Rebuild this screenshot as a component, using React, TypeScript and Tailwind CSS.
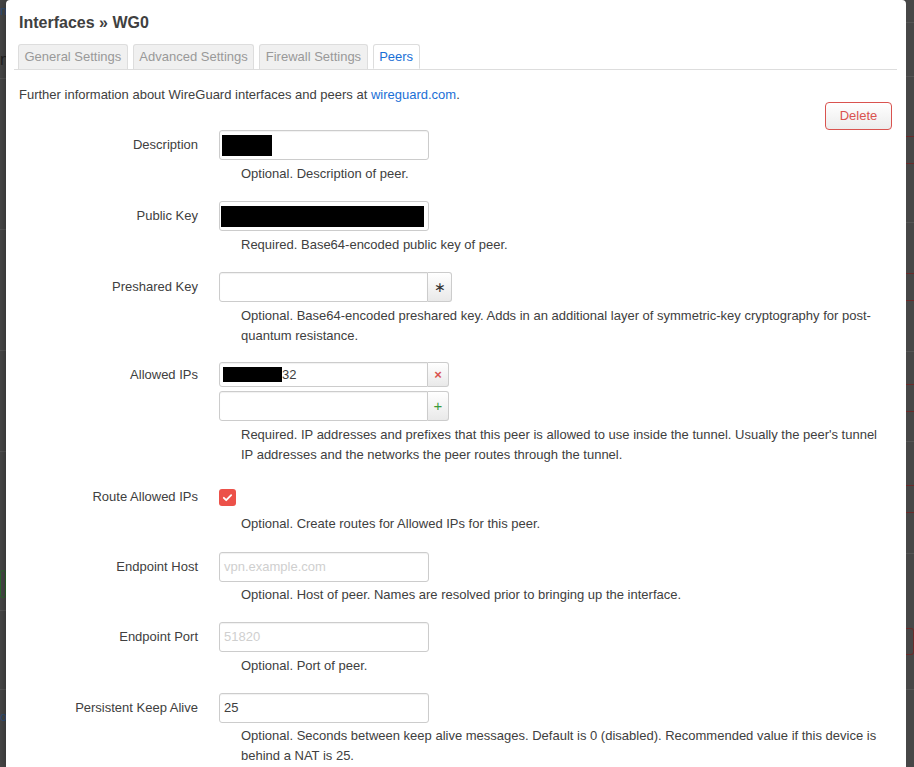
import type { ReactNode } from "react"

const font = "font-['Liberation_Sans',Arial,Helvetica,sans-serif]"

function Tab({ label, active }: { label: string; active?: boolean }) {
  if (active) {
    return (
      <div className="mr-[5px] -mb-px flex h-[25px] items-center rounded-t-[3px] border border-[#ddd] border-b-white bg-white px-[5.5px] text-[13px] text-[#1a6fd6]">
        {label}
      </div>
    )
  }
  return (
    <div className="mr-[5px] flex h-[25px] items-center rounded-t-[3px] border border-b-0 border-[#ddd] bg-[#f0f0f0] px-[5.5px] text-[13px] text-[#999]">
      {label}
    </div>
  )
}

function Row({
  label,
  fieldHeight = 30,
  help,
  helpGap = "mt-[4px]",
  spacing = "mb-[17px]",
  children,
}: {
  label: string
  fieldHeight?: 25 | 30
  help: ReactNode
  helpGap?: string
  spacing?: string
  children: ReactNode
}) {
  return (
    <div className={`${spacing} flex`}>
      <div
        className={`flex w-[179px] shrink-0 items-center justify-end text-[13px] text-[#404040] ${
          fieldHeight === 25 ? "h-[25px]" : "h-[30px]"
        }`}
      >
        {label}
      </div>
      <div className="ml-[21px] flex-1">
        {children}
        <div className={`${helpGap} pl-[22px] text-[13px] leading-[20px] text-[#404040]`}>{help}</div>
      </div>
    </div>
  )
}

function TextInput({ value, placeholder, redact }: { value?: string; placeholder?: string; redact?: number }) {
  return (
    <div
      className={`flex h-[30px] w-[210px] items-center rounded-[3px] border border-[#ccc] bg-white text-[13px] text-[#404040] shadow-[inset_0_1px_1px_rgba(0,0,0,0.06)] ${
        redact ? "px-[2px]" : "px-[4px]"
      }`}
    >
      {redact ? <span className="h-[21px] bg-black" style={{ width: redact }} /> : null}
      {value ? <span>{value}</span> : null}
      {placeholder ? <span className="text-[#cfcfcf]">{placeholder}</span> : null}
    </div>
  )
}

function AddonInput({
  height,
  addonWidth,
  addon,
  children,
}: {
  height: 25 | 30
  addonWidth: string
  addon: ReactNode
  children?: ReactNode
}) {
  return (
    <div className={`flex ${height === 25 ? "h-[25px]" : "h-[30px]"}`}>
      <div className="flex w-[209px] items-center rounded-l-[3px] border border-[#ccc] bg-white px-[3px] text-[13px] text-[#404040] shadow-[inset_0_1px_1px_rgba(0,0,0,0.06)]">
        {children}
      </div>
      <div
        className={`flex ${addonWidth} items-center justify-center rounded-r-[3px] border border-l-0 border-[#ccc] bg-gradient-to-b from-white to-[#e9e9e9] text-[14px]`}
      >
        {addon}
      </div>
    </div>
  )
}

function LeftStrip() {
  return (
    <div className="flex w-[6px] shrink-0 flex-col overflow-hidden bg-[#474747] text-[13px] leading-none">
      <div className="mt-[4px] h-[12px] text-[#2d4f7a]">n</div>
      <div className="mt-[36px] h-[16px] text-[16px] text-[#222]">n</div>
      <div className="mt-[10px] border-t border-[#555]" />
      <div className="mt-[150px] border-t border-[#555]" />
      <div className="mt-[120px] border-t border-[#555]" />
      <div className="mt-[100px] border-t border-[#555]" />
      <div className="mt-[118px] h-[28px] rounded-[3px] border border-[#2c6a2c]" />
      <div className="mt-[12px] border-t border-[#555]" />
      <div className="mt-[78px] border-t border-[#555]" />
      <div className="mt-[20px] text-[#2d4f7a]">o</div>
    </div>
  )
}

function RightStrip() {
  return (
    <div className="flex w-[8px] shrink-0 flex-col bg-[#474747]">
      <div className="mt-[22px] border-t border-[#555]" />
      <div className="mt-[53px] border-t border-[#555]" />
      <div className="mt-[59px] border-t border-[#6a2a2a]" />
      <div className="mt-[26px] border-t border-[#6a2a2a]" />
      <div className="mt-[58px] border-t border-[#555]" />
      <div className="mt-[50px] border-t border-[#6a2a2a]" />
      <div className="mt-[26px] border-t border-[#6a2a2a]" />
      <div className="mt-[50px] border-t border-[#555]" />
      <div className="mt-[32px] border-t border-[#6a2a2a]" />
      <div className="mt-[26px] border-t border-[#6a2a2a]" />
      <div className="mt-[29px] border-t border-[#555]" />
      <div className="mt-[43px] border-t border-[#6a2a2a]" />
      <div className="mt-[26px] border-t border-[#6a2a2a]" />
      <div className="mt-[40px] border-t border-[#555]" />
      <div className="mt-[74px] h-[27px] rounded-r-[3px] border border-l-0 border-[#6a2a2a]" />
      <div className="mt-[34px] border-t border-[#555]" />
    </div>
  )
}

export default function App() {
  return (
    <div className={`flex h-[767px] w-[914px] overflow-hidden bg-[#474747] ${font}`}>
      <LeftStrip />

      {/* Modal */}
      <div className="w-[900px] shrink-0 rounded-t-[4px] bg-white pl-[13px] pr-[14px] pt-[13px] shadow-[0_0_10px_rgba(0,0,0,0.4)]">
        <h2 className="text-[16px] font-bold leading-[20px] text-[#404040]">Interfaces » WG0</h2>

        <div className="-mx-[5px] mt-[11px] flex border-b border-[#ddd] pl-[4px]">
          <Tab label="General Settings" />
          <Tab label="Advanced Settings" />
          <Tab label="Firewall Settings" />
          <Tab label="Peers" active />
        </div>

        <p className="mt-[15px] text-[13px] leading-[20px] text-[#404040]">
          Further information about WireGuard interfaces and peers at{" "}
          <span className="text-[#1a6fd6]">wireguard.com</span>.
        </p>

        <div className="-mt-[3px] flex justify-end">
          <button className="h-[28px] w-[67px] rounded-[4px] border border-[#d9534f] bg-gradient-to-b from-white to-[#ececec] text-[13px] text-[#d9534f]">
            Delete
          </button>
        </div>

        <div className="flex flex-col">
          <Row label="Description" help="Optional. Description of peer.">
            <TextInput redact={50} />
          </Row>

          <Row label="Public Key" help="Required. Base64-encoded public key of peer.">
            <div className="flex h-[30px] w-[210px] items-center rounded-[3px] border border-[#ccc] bg-white px-[1px]">
              <span className="h-[21px] w-[203px] bg-black" />
            </div>
          </Row>

          <Row
            label="Preshared Key"
            spacing="mb-[16px]"
            help="Optional. Base64-encoded preshared key. Adds in an additional layer of symmetric-key cryptography for post-quantum resistance."
          >
            <AddonInput height={30} addonWidth="w-[24px]" addon={<span className="text-[#333]">∗</span>} />
          </Row>

          <Row
            label="Allowed IPs"
            fieldHeight={25}
            help="Required. IP addresses and prefixes that this peer is allowed to use inside the tunnel. Usually the peer's tunnel IP addresses and the networks the peer routes through the tunnel."
          >
            <AddonInput height={25} addonWidth="w-[21px]" addon={<span className="text-[13px] font-bold text-[#d9534f]">×</span>}>
              <span className="h-[15px] w-[59px] bg-black" />
              <span>32</span>
            </AddonInput>
            <div className="mt-[4px]">
              <AddonInput height={30} addonWidth="w-[21px]" addon={<span className="text-[15px] text-[#3a9a3a]">+</span>} />
            </div>
          </Row>

          <Row
            label="Route Allowed IPs"
            helpGap="mt-[2px]"
            spacing="mb-[18px]"
            help="Optional. Create routes for Allowed IPs for this peer."
          >
            <div className="flex h-[30px] items-center">
              <span className="flex h-[17px] w-[17px] items-center justify-center rounded-[3px] bg-[#ec5149]">
                <svg width="11" height="11" viewBox="0 0 12 12" fill="none">
                  <path d="M2 6.3l2.6 2.6L10 3.4" stroke="white" strokeWidth="2" strokeLinecap="round" strokeLinejoin="round" />
                </svg>
              </span>
            </div>
          </Row>

          <Row
            label="Endpoint Host"
            helpGap="mt-[3px]"
            help="Optional. Host of peer. Names are resolved prior to bringing up the interface."
          >
            <TextInput placeholder="vpn.example.com" />
          </Row>

          <Row label="Endpoint Port" help="Optional. Port of peer.">
            <TextInput placeholder="51820" />
          </Row>

          <Row
            label="Persistent Keep Alive"
            helpGap="mt-[3px]"
            help="Optional. Seconds between keep alive messages. Default is 0 (disabled). Recommended value if this device is behind a NAT is 25."
          >
            <TextInput value="25" />
          </Row>
        </div>
      </div>

      <RightStrip />
    </div>
  )
}
